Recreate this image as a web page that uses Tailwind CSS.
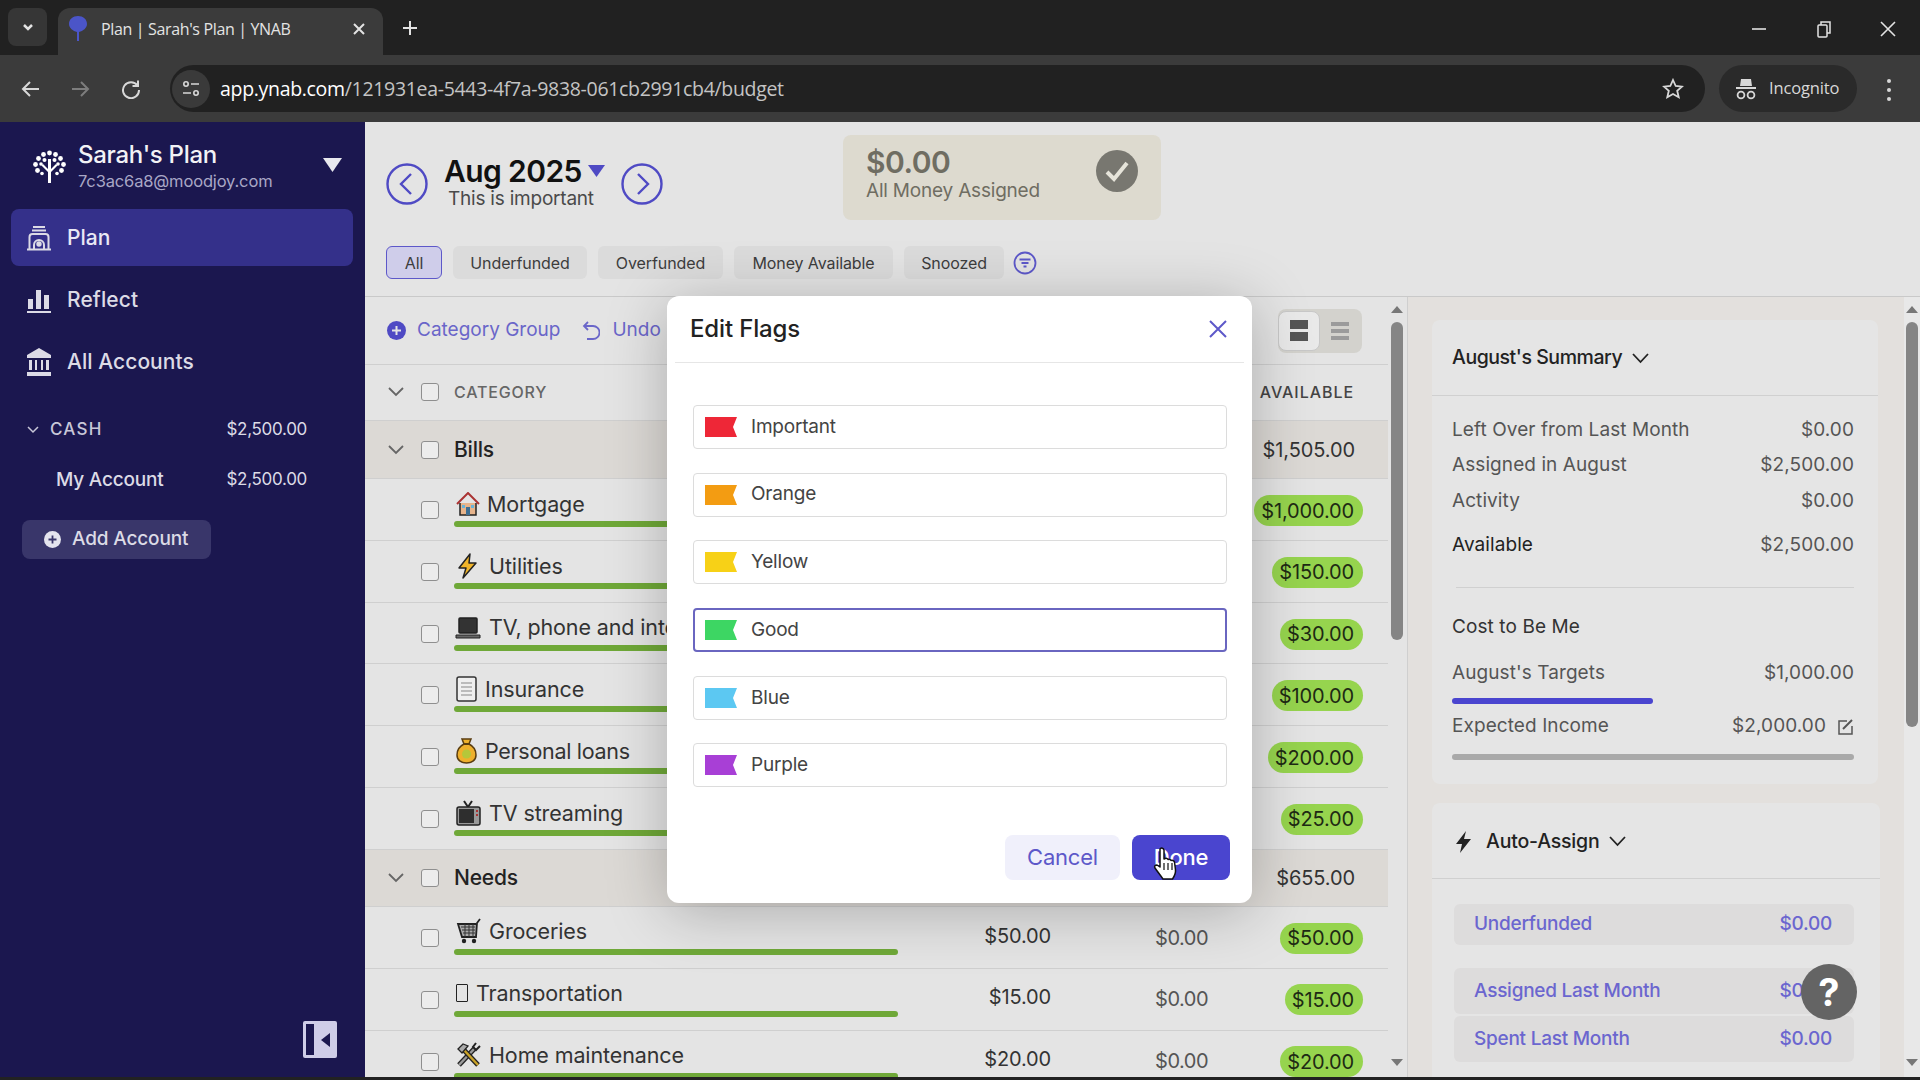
<!DOCTYPE html>
<html lang="en">
<head>
    <meta charset="UTF-8">
    <title>Plan | Sarah's Plan | YNAB</title>
    <script src="https://cdn.jsdelivr.net/npm/@tailwindcss/browser@4"></script>
</head>
<body class="bg-[#212121] font-[family-name:Inter,sans-serif] overflow-hidden">
<div class="w-[1920px] h-[1080px] flex flex-col relative overflow-hidden">

    <!-- browser tabs -->
    <div class="h-[55px] bg-[#212121] flex items-start text-[#e3e3e3] font-[family-name:Open_Sans,sans-serif] shrink-0">
        <div class="ml-[8px] mt-[8px] w-[39px] h-[38px] rounded-lg bg-[#363636] flex items-center justify-center">
            <svg class="w-[14px] h-[14px]" fill="none" stroke="currentColor" stroke-width="2.5" viewBox="0 0 14 14"><path d="M3 5l4 4 4-4"/></svg>
        </div>
        <div class="ml-[11px] mt-[8px] w-[325px] h-[47px] rounded-t-xl bg-[#3b3b3b] flex items-center pb-[6px]">
            <svg class="ml-[10px] w-[20px] h-[26px] text-[#4b55c8]" fill="currentColor" viewBox="0 0 20 26"><path d="M10 0c5 0 9 3 9 8 0 4-4 7-8 8v9H9v-9C5 15 1 12 1 8c0-5 4-8 9-8z"/></svg>
            <span class="ml-[13px] text-[16px] leading-none tracking-[-0.35px] whitespace-nowrap">Plan | Sarah's Plan | YNAB</span>
            <svg class="ml-auto mr-[17px] w-[14px] h-[14px]" fill="none" stroke="currentColor" stroke-width="2" viewBox="0 0 14 14"><path d="M2 2l10 10M12 2L2 12"/></svg>
        </div>
        <svg class="ml-[19px] mt-[20px] w-[16px] h-[16px]" fill="none" stroke="currentColor" stroke-width="2" viewBox="0 0 16 16"><path d="M8 1v14M1 8h14"/></svg>
        <div class="ml-auto mt-[20px] flex items-center">
            <svg class="w-[16px] h-[16px]" fill="none" stroke="currentColor" stroke-width="1.6" viewBox="0 0 16 16"><path d="M1 8h14"/></svg>
            <svg class="ml-[49px] w-[16px] h-[18px]" fill="none" stroke="currentColor" stroke-width="1.5" viewBox="0 0 16 18"><rect x="2" y="5" width="9" height="12" rx="1"/><path d="M5 5V2h9v11h-3"/></svg>
            <svg class="ml-[48px] mr-[24px] w-[16px] h-[16px]" fill="none" stroke="currentColor" stroke-width="1.6" viewBox="0 0 16 16"><path d="M1 1l14 14M15 1L1 15"/></svg>
        </div>
    </div>

    <!-- browser toolbar -->
    <div class="h-[67px] bg-[#3b3b3b] flex items-start text-[#d8d8d8] font-[family-name:Open_Sans,sans-serif] shrink-0">
        <svg class="ml-[21px] mt-[24px] w-[20px] h-[20px]" fill="none" stroke="currentColor" stroke-width="2" viewBox="0 0 20 20"><path d="M18 10H3M9 3l-7 7 7 7"/></svg>
        <svg class="ml-[29px] mt-[24px] w-[20px] h-[20px] text-[#7d7d7d]" fill="none" stroke="currentColor" stroke-width="2" viewBox="0 0 20 20"><path d="M2 10h15M11 3l7 7-7 7"/></svg>
        <svg class="ml-[31px] mt-[24px] w-[20px] h-[20px]" fill="none" stroke="currentColor" stroke-width="2" viewBox="0 0 20 20"><path d="M16.5 6.5A8 8 0 1 0 18 11M17 1.5v5.5h-5.5"/></svg>
        <div class="ml-[29px] mt-[10px] w-[1535px] h-[47px] rounded-full bg-[#212121] flex items-center">
            <div class="ml-[2px] w-[38px] h-[38px] rounded-full bg-[#3a3a3a] flex items-center justify-center">
                <svg class="w-[18px] h-[18px]" fill="none" stroke="currentColor" stroke-width="1.6" viewBox="0 0 18 18"><circle cx="4" cy="4" r="2.2"/><path d="M9 4h8M1 13h8"/><circle cx="14" cy="13" r="2.2"/></svg>
            </div>
            <span class="ml-[10px] text-[19.5px] leading-none tracking-[-0.32px] whitespace-nowrap"><span class="text-white">app.ynab.com</span><span class="text-[#c4c4c4]">/121931ea-5443-4f7a-9838-061cb2991cb4/budget</span></span>
            <svg class="ml-auto mr-[21px] w-[22px] h-[22px]" fill="none" stroke="currentColor" stroke-width="1.8" viewBox="0 0 22 22"><path d="M11 2l2.7 6 6.3.6-4.8 4.2 1.5 6.4L11 16l-5.7 3.2 1.5-6.4L2 8.6 8.3 8z"/></svg>
        </div>
        <div class="ml-[14px] mt-[10px] w-[138px] h-[47px] rounded-full bg-[#2a2a2a] flex items-center">
            <svg class="ml-[17px] w-[20px] h-[22px]" fill="currentColor" viewBox="0 0 20 22"><path d="M5 1h10l1 7H4zM0 9h20v2H0z"/><circle cx="5" cy="17" r="3.4" fill="none" stroke="currentColor" stroke-width="1.8"/><circle cx="15" cy="17" r="3.4" fill="none" stroke="currentColor" stroke-width="1.8"/></svg>
            <span class="ml-[13px] text-[16.5px] leading-none tracking-[-0.15px]">Incognito</span>
        </div>
        <div class="ml-[30px] mt-[24px] flex flex-col gap-[5px]">
            <span class="w-[4px] h-[4px] rounded-full bg-[#d8d8d8]"></span>
            <span class="w-[4px] h-[4px] rounded-full bg-[#d8d8d8]"></span>
            <span class="w-[4px] h-[4px] rounded-full bg-[#d8d8d8]"></span>
        </div>
    </div>

    <!-- app -->
    <div class="flex h-[955px] shrink-0 relative overflow-hidden">

        <!-- sidebar -->
        <aside class="w-[365px] shrink-0 bg-[#1b174f] flex flex-col relative text-[#dcdbe6]">
            <div class="h-[87px] flex items-start">
                <svg class="ml-[33px] mt-[28px] w-[33px] h-[33px] text-white" fill="currentColor" viewBox="0 0 33 33"><path d="M15 33V22L8.500 15.500l1.500-1.500 5 5V9h3v10l5-5 1.500 1.500L18 22v11z"/><circle cx="16.500" cy="3" r="2.400"/><circle cx="10.500" cy="4.500" r="2.400"/><circle cx="22.500" cy="4.500" r="2.400"/><circle cx="5.500" cy="8.500" r="2.400"/><circle cx="27.500" cy="8.500" r="2.400"/><circle cx="2.500" cy="14.500" r="2.400"/><circle cx="30.500" cy="14.500" r="2.400"/><circle cx="4.500" cy="20.500" r="2.400"/><circle cx="28.500" cy="20.500" r="2.400"/><circle cx="11.500" cy="10" r="2"/><circle cx="21.500" cy="10" r="2"/><circle cx="8" cy="14" r="1.800"/><circle cx="25" cy="14" r="1.800"/><circle cx="9" cy="23.500" r="1.800"/><circle cx="24" cy="23.500" r="1.800"/></svg>
                <div class="ml-[12px] mt-[18px]">
                    <div class="text-[24px] leading-[30px] font-medium text-[#f2f2f6] tracking-[-0.3px]">Sarah's Plan</div>
                    <div class="text-[16.500px] leading-[22px] text-[#a9a7c6] tracking-[-0.15px]">7c3ac6a8@moodjoy.com</div>
                </div>
                <svg class="ml-auto mr-[23px] mt-[36px] w-[19px] h-[14px] text-[#e8e8ee]" fill="currentColor" viewBox="0 0 19 14"><path d="M0 0h19L9.500 14z"/></svg>
            </div>
            <div class="ml-[11px] mr-[12px] h-[57px] rounded-lg bg-[#34308a] flex items-center">
                <svg class="ml-[15px] w-[26px] h-[26px]" fill="none" stroke="currentColor" stroke-width="2" viewBox="0 0 26 26"><path d="M7 2h12M6 5.500h14M3.500 24.500V12c0-2 1-3 3-3h13c2 0 3 1 3 3v12.500zM1 24.500h24"/><path d="M8 24v-4a5 5 0 0 1 10 0v4"/><circle cx="13" cy="19" r="1.700" fill="currentColor"/></svg>
                <span class="ml-[15px] text-[21px] font-medium text-[#e9e8f5]">Plan</span>
            </div>
            <div class="mt-[5px] h-[57px] flex items-center">
                <svg class="ml-[26px] w-[26px] h-[26px]" fill="currentColor" viewBox="0 0 26 26"><path d="M2 12h5v10H2zM10 3h5v19h-5zM18 8h5v14h-5zM1 24h24v2H1z"/></svg>
                <span class="ml-[15px] text-[21px] font-medium tracking-[0.1px]">Reflect</span>
            </div>
            <div class="mt-[5px] h-[57px] flex items-center">
                <svg class="ml-[26px] w-[26px] h-[28px]" fill="currentColor" viewBox="0 0 26 28"><path d="M13 0l12 7v3H1V7zM3 12h3v10H3zM9 12h2v10H9zM15 12h2v10h-2zM20 12h3v10h-3zM1 24h24v4H1z"/></svg>
                <span class="ml-[15px] text-[21px] font-medium tracking-[0.05px]">All Accounts</span>
            </div>
            <div class="mt-[28px] flex items-center h-[24px] text-[#c8c7d8]">
                <svg class="ml-[27px] w-[12px] h-[8px]" fill="none" stroke="currentColor" stroke-width="1.500" viewBox="0 0 12 8"><path d="M1 1l5 5 5-5"/></svg>
                <span class="ml-[11px] text-[17px] font-medium tracking-[1.2px]">CASH</span>
                <span class="ml-auto mr-[58px] text-[17px] text-[#dcdbe6] tracking-[-0.3px]">$2,500.00</span>
            </div>
            <div class="mt-[25px] flex items-center h-[26px]">
                <span class="ml-[56px] text-[19px] font-medium tracking-[-0.2px]">My Account</span>
                <span class="ml-auto mr-[58px] text-[17px] tracking-[-0.3px]">$2,500.00</span>
            </div>
            <div class="ml-[22px] mt-[27px] w-[189px] h-[39px] rounded-lg bg-[#39366a] flex items-center">
                <svg class="ml-[22px] w-[17px] h-[17px] text-[#e4e4ee]" viewBox="0 0 17 17"><circle cx="8.500" cy="8.500" r="8.500" fill="currentColor"/><path d="M8.500 4.500v8M4.500 8.500h8" stroke="#39366a" stroke-width="1.800"/></svg>
                <span class="ml-[11px] text-[19px] font-medium text-[#dcdbe6] tracking-[-0.15px]">Add Account</span>
            </div>
            <div class="absolute left-[303px] top-[899px] w-[34px] h-[37px] bg-[#cfcde8] rounded-[2px] flex items-center">
                <span class="ml-[3px] w-[8px] h-[31px] bg-[#1b174f]"></span>
                <svg class="ml-[7px] w-[9px] h-[14px] text-[#1b174f]" fill="currentColor" viewBox="0 0 9 14"><path d="M9 0v14L0 7z"/></svg>
            </div>
        </aside>

        <!-- main -->
        <main class="flex-1 bg-[#e4e4e4] flex flex-col min-w-0">
            <!-- month header -->
            <header class="h-[175px] shrink-0 border-b border-[#c9c9c9] pl-[21px] pt-[13px]">
                <div class="h-[85px] flex items-start">
                    <svg class="mt-[28px] w-[42px] h-[42px] text-[#4f4ac4]" fill="none" stroke="currentColor" stroke-width="2.400" viewBox="0 0 42 42"><circle cx="21" cy="21" r="19.500"/><path d="M25 11L15 21l10 10"/></svg>
                    <div class="ml-[16px] mt-[17px] w-[177px]">
                        <div class="flex items-start h-[38px]">
                            <span class="text-[30px] leading-[38px] font-semibold text-[#111] tracking-[-0.6px]">Aug 2025</span>
                            <svg class="ml-[6px] mt-[13px] w-[17px] h-[12px] text-[#4f4ac4]" fill="currentColor" viewBox="0 0 17 12"><path d="M0 0h17L8.500 12z"/></svg>
                        </div>
                        <div class="ml-[4px] -mt-[2px] text-[19px] leading-[22px] text-[#4a4a4a] tracking-[-0.22px]">This is important</div>
                    </div>
                    <svg class="mt-[28px] w-[42px] h-[42px] text-[#4f4ac4]" fill="none" stroke="currentColor" stroke-width="2.400" viewBox="0 0 42 42"><circle cx="21" cy="21" r="19.500"/><path d="M17 11l10 10-10 10"/></svg>
                    <div class="ml-[180px] w-[318px] h-[85px] rounded-lg bg-[#dddacf] flex items-center relative">
                        <div class="ml-[23px] -mt-[9px] text-[#6f6d62]">
                            <div class="text-[30px] leading-[36px] font-semibold tracking-[-0.5px]">$0.00</div>
                            <div class="text-[19px] leading-[24px] tracking-[-0.2px] -mt-[1px]">All Money Assigned</div>
                        </div>
                        <div class="ml-auto mr-[23px] -mt-[13px] w-[42px] h-[42px] rounded-full bg-[#787770] flex items-center justify-center">
                            <svg class="w-[26px] h-[24px] text-[#e6e4da]" fill="none" stroke="currentColor" stroke-width="4" viewBox="0 0 26 24"><path d="M3 13l7 7L23 4"/></svg>
                        </div>
                    </div>
                </div>
                <div class="mt-[26px] flex items-center gap-[11px] text-[16px] text-[#3d3d3d] tracking-[-0.1px]">
                    <span class="w-[56px] h-[33px] rounded-md bg-[#cfcdea] border border-[#5d58c9] flex items-center justify-center">All</span>
                    <span class="w-[134px] h-[33px] rounded-md bg-[#dbdbdb] flex items-center justify-center">Underfunded</span>
                    <span class="w-[125px] h-[33px] rounded-md bg-[#dbdbdb] flex items-center justify-center">Overfunded</span>
                    <span class="w-[159px] h-[33px] rounded-md bg-[#dbdbdb] flex items-center justify-center">Money Available</span>
                    <span class="w-[100px] h-[33px] rounded-md bg-[#dbdbdb] flex items-center justify-center">Snoozed</span>
                    <svg class="-ml-[2px] w-[24px] h-[24px] text-[#5d58c9]" fill="none" stroke="currentColor" stroke-width="1.800" viewBox="0 0 24 24"><circle cx="12" cy="12" r="10.500"/><path d="M6.500 8.500h11M8.500 12h7M10.500 15.500h3"/></svg>
                </div>
            </header>

            <div class="flex flex-1 min-h-0">
                <!-- budget table -->
                <section class="w-[1023px] shrink-0 overflow-hidden">
                    <div class="h-[68px] border-b border-[#cfcfcf] flex items-center text-[#6a66c9] text-[19px] tracking-[0px]">
                        <svg class="ml-[22px] w-[19px] h-[19px] text-[#4f4ac4]" viewBox="0 0 19 19"><circle cx="9.500" cy="9.500" r="9.500" fill="currentColor"/><path d="M9.500 5v9M5 9.500h9" stroke="#e4e4e4" stroke-width="2"/></svg>
                        <span class="ml-[11px]">Category Group</span>
                        <svg class="ml-[22px] w-[18px] h-[20px]" fill="none" stroke="currentColor" stroke-width="1.800" viewBox="0 0 18 20"><path d="M6 1L2 5l4 4M2 5h9a5.500 5.500 0 0 1 0 13H5"/></svg>
                        <span class="ml-[12px]">Undo</span>
                        <div class="ml-auto mr-[26px] w-[84px] h-[44px] rounded-lg bg-[#d3d2cd] flex items-center">
                            <div class="w-[42px] h-[40px] rounded-lg bg-[#e9e9e9] border border-[#c8c8c8] flex flex-col gap-[3px] items-center justify-center">
                                <span class="w-[18px] h-[9px] bg-[#555]"></span>
                                <span class="w-[18px] h-[9px] bg-[#555]"></span>
                            </div>
                            <div class="ml-[11px] flex flex-col gap-[3px]">
                                <span class="w-[18px] h-[4px] bg-[#9b9b9b]"></span>
                                <span class="w-[18px] h-[4px] bg-[#9b9b9b]"></span>
                                <span class="w-[18px] h-[4px] bg-[#9b9b9b]"></span>
                            </div>
                        </div>
                    </div>

                    <div class="h-[56px] border-b border-[#cfcfcf] flex items-center pb-[2px]">
                        <svg class="ml-[23px] w-[16px] h-[10px] text-[#666]" fill="none" stroke="currentColor" stroke-width="1.800" viewBox="0 0 16 10"><path d="M1 1l7 7 7-7"/></svg>
                        <span class="ml-[17px] w-[18px] h-[18px] rounded-[3px] border border-[#8f8f8f] bg-[#ececec]"></span>
                        <span class="ml-[15px] text-[16px] font-medium tracking-[0.8px] text-[#666]">CATEGORY</span>
                        <span class="ml-auto mr-[34px] text-[16px] font-medium tracking-[0.95px] text-[#444]">AVAILABLE</span>
                    </div>

                    <!-- Bills -->
                    <div class="h-[58px] border-b border-[#cfcfcf] bg-[#dcd9d5] flex items-center">
                        <svg class="ml-[23px] w-[16px] h-[10px] text-[#666]" fill="none" stroke="currentColor" stroke-width="1.800" viewBox="0 0 16 10"><path d="M1 1l7 7 7-7"/></svg>
                        <span class="ml-[17px] w-[18px] h-[18px] rounded-[3px] border border-[#8f8f8f] bg-[#ececec]"></span>
                        <span class="ml-[15px] text-[21px] font-medium text-[#222] tracking-[-0.2px]">Bills</span>
                        <span class="ml-auto mr-[33px] text-[20px] text-[#333] tracking-[-0.1px]">$1,505.00</span>
                    </div>

                    <div class="h-[61.800px] border-b border-[#cfcfcf] flex">
                        <span class="ml-[56px] mt-[22px] w-[18px] h-[18px] rounded-[3px] border border-[#8f8f8f] bg-[#ececec]"></span>
                        <div class="ml-[15px] w-[444px] mt-[11px]">
                            <div class="h-[28px] flex items-center text-[21.500px] text-[#333] tracking-[-0.12px]">
                                <svg class="ml-[2px] w-[24px] h-[24px]" viewBox="0 0 24 24"><path d="M4 11v12h16V11" fill="#e7b48b" stroke="#222" stroke-width="1.500"/><path d="M1 12L12 1l11 11" fill="none" stroke="#a33" stroke-width="2"/><rect x="10" y="15" width="4" height="8" fill="#3d6d91"/><rect x="6" y="13" width="3" height="3" fill="#69b3d8"/><rect x="15" y="13" width="3" height="3" fill="#69b3d8"/></svg>
                                <span class="ml-[7px]">Mortgage</span>
                            </div>
                            <div class="mt-[3px] h-[6px] rounded-full bg-[#6fa838]"></div>
                        </div>
                        <div class="ml-auto mr-[25px] mt-[16px] h-[31px] pl-[7px] pr-[9px] rounded-full bg-[#96d44e] flex items-center text-[20px] text-[#1e2a14] tracking-[-0.15px]">$1,000.00</div>
                    </div>
                    <div class="h-[61.800px] border-b border-[#cfcfcf] flex">
                        <span class="ml-[56px] mt-[22px] w-[18px] h-[18px] rounded-[3px] border border-[#8f8f8f] bg-[#ececec]"></span>
                        <div class="ml-[15px] w-[444px] mt-[11px]">
                            <div class="h-[28px] flex items-center text-[21.500px] text-[#333] tracking-[-0.12px]">
                                <svg class="ml-[1px] w-[25px] h-[26px]" viewBox="0 0 25 26"><path d="M15 1L4 15h7l-3 10 13-15h-7z" fill="#f0b429" stroke="#222" stroke-width="1.500" stroke-linejoin="round"/></svg>
                                <span class="ml-[9px]">Utilities</span>
                            </div>
                            <div class="mt-[3px] h-[6px] rounded-full bg-[#6fa838]"></div>
                        </div>
                        <div class="ml-auto mr-[25px] mt-[16px] h-[31px] pl-[7px] pr-[9px] rounded-full bg-[#96d44e] flex items-center text-[20px] text-[#1e2a14] tracking-[-0.15px]">$150.00</div>
                    </div>
                    <div class="h-[61.800px] border-b border-[#cfcfcf] flex">
                        <span class="ml-[56px] mt-[22px] w-[18px] h-[18px] rounded-[3px] border border-[#8f8f8f] bg-[#ececec]"></span>
                        <div class="ml-[15px] w-[444px] mt-[11px]">
                            <div class="h-[28px] flex items-center text-[21.500px] text-[#333] tracking-[-0.12px]">
                                <svg class="ml-[1px] w-[26px] h-[24px]" viewBox="0 0 26 24"><rect x="4" y="2" width="18" height="15" rx="1" fill="#333" stroke="#222" stroke-width="1.500"/><path d="M1 19h24v3H1z" fill="#666" stroke="#222"/></svg>
                                <span class="ml-[8px] whitespace-nowrap">TV, phone and internet</span>
                            </div>
                            <div class="mt-[3px] h-[6px] rounded-full bg-[#6fa838]"></div>
                        </div>
                        <div class="ml-auto mr-[25px] mt-[16px] h-[31px] pl-[7px] pr-[9px] rounded-full bg-[#96d44e] flex items-center text-[20px] text-[#1e2a14] tracking-[-0.15px]">$30.00</div>
                    </div>
                    <div class="h-[61.800px] border-b border-[#cfcfcf] flex">
                        <span class="ml-[56px] mt-[22px] w-[18px] h-[18px] rounded-[3px] border border-[#8f8f8f] bg-[#ececec]"></span>
                        <div class="ml-[15px] w-[444px] mt-[11px]">
                            <div class="h-[28px] flex items-center text-[21.500px] text-[#333] tracking-[-0.12px]">
                                <svg class="ml-[2px] w-[21px] h-[26px]" viewBox="0 0 21 26"><rect x="1" y="1" width="19" height="24" rx="2" fill="#efefef" stroke="#333" stroke-width="1.500"/><path d="M5 7h11M5 11h11M5 15h11M5 19h11" stroke="#888" stroke-width="1.200"/></svg>
                                <span class="ml-[8px]">Insurance</span>
                            </div>
                            <div class="mt-[3px] h-[6px] rounded-full bg-[#6fa838]"></div>
                        </div>
                        <div class="ml-auto mr-[25px] mt-[16px] h-[31px] pl-[7px] pr-[9px] rounded-full bg-[#96d44e] flex items-center text-[20px] text-[#1e2a14] tracking-[-0.15px]">$100.00</div>
                    </div>
                    <div class="h-[61.800px] border-b border-[#cfcfcf] flex">
                        <span class="ml-[56px] mt-[22px] w-[18px] h-[18px] rounded-[3px] border border-[#8f8f8f] bg-[#ececec]"></span>
                        <div class="ml-[15px] w-[444px] mt-[11px]">
                            <div class="h-[28px] flex items-center text-[21.500px] text-[#333] tracking-[-0.3px]">
                                <svg class="ml-[2px] w-[21px] h-[26px]" viewBox="0 0 21 26"><path d="M6 1h9l-2 5c4 2 7 6 7 11 0 5-4 8-9.500 8S1 22 1 17c0-5 3-9 7-11z" fill="#eeb02c" stroke="#5a3d10" stroke-width="1.500"/><path d="M7 6h7" stroke="#5a3d10" stroke-width="2"/><circle cx="10.500" cy="16" r="4.500" fill="#b5c73a"/></svg>
                                <span class="ml-[8px]">Personal loans</span>
                            </div>
                            <div class="mt-[3px] h-[6px] rounded-full bg-[#6fa838]"></div>
                        </div>
                        <div class="ml-auto mr-[25px] mt-[16px] h-[31px] pl-[7px] pr-[9px] rounded-full bg-[#96d44e] flex items-center text-[20px] text-[#1e2a14] tracking-[-0.15px]">$200.00</div>
                    </div>
                    <div class="h-[61.800px] border-b border-[#cfcfcf] flex">
                        <span class="ml-[56px] mt-[22px] w-[18px] h-[18px] rounded-[3px] border border-[#8f8f8f] bg-[#ececec]"></span>
                        <div class="ml-[15px] w-[444px] mt-[11px]">
                            <div class="h-[28px] flex items-center text-[21.500px] text-[#333] tracking-[-0.12px]">
                                <svg class="ml-[2px] w-[25px] h-[26px]" viewBox="0 0 25 26"><path d="M8 1l4 6 4-6" fill="none" stroke="#222" stroke-width="2"/><rect x="1" y="7" width="23" height="18" rx="2" fill="#999" stroke="#222" stroke-width="1.500"/><rect x="3" y="9" width="15" height="14" fill="#2e2e2e"/><path d="M20 11h2M20 15h2" stroke="#a33" stroke-width="2"/></svg>
                                <span class="ml-[8px]">TV streaming</span>
                            </div>
                            <div class="mt-[3px] h-[6px] rounded-full bg-[#6fa838]"></div>
                        </div>
                        <div class="ml-auto mr-[25px] mt-[16px] h-[31px] pl-[7px] pr-[9px] rounded-full bg-[#96d44e] flex items-center text-[20px] text-[#1e2a14] tracking-[-0.15px]">$25.00</div>
                    </div>

                    <!-- Needs -->
                    <div class="h-[57.400px] border-b border-[#cfcfcf] bg-[#dcd9d5] flex items-center">
                        <svg class="ml-[23px] w-[16px] h-[10px] text-[#666]" fill="none" stroke="currentColor" stroke-width="1.800" viewBox="0 0 16 10"><path d="M1 1l7 7 7-7"/></svg>
                        <span class="ml-[17px] w-[18px] h-[18px] rounded-[3px] border border-[#8f8f8f] bg-[#ececec]"></span>
                        <span class="ml-[15px] text-[21px] font-medium text-[#222] tracking-[-0.2px]">Needs</span>
                        <span class="ml-auto mr-[33px] text-[20px] text-[#333] tracking-[-0.1px]">$655.00</span>
                    </div>

                    <div class="h-[61.800px] border-b border-[#cfcfcf] flex">
                        <span class="ml-[56px] mt-[22px] w-[18px] h-[18px] rounded-[3px] border border-[#8f8f8f] bg-[#ececec]"></span>
                        <div class="ml-[15px] w-[444px] mt-[10px]">
                            <div class="h-[28px] flex items-center text-[21.500px] text-[#333] tracking-[-0.12px]">
                                <svg class="ml-[2px] w-[25px] h-[26px]" viewBox="0 0 25 26"><path d="M24 1l-3 4-1 14H6L2 6h18" fill="#aaa" stroke="#222" stroke-width="1.800"/><path d="M5 9h14M6 12h13M7 15h12M9 6v13M13 6v13M17 6v13" stroke="#333"/><circle cx="8" cy="23" r="2.200" fill="#222"/><circle cx="18" cy="23" r="2.200" fill="#222"/></svg>
                                <span class="ml-[8px]">Groceries</span>
                            </div>
                            <div class="mt-[4px] h-[6px] rounded-full bg-[#6fa838]"></div>
                        </div>
                        <div class="w-[153px] mt-[13px] h-[31px] flex items-center justify-end text-[20px] text-[#333] tracking-[-0.15px]">$50.00</div>
                        <div class="w-[157px] mt-[15px] h-[31px] flex items-center justify-end text-[20px] text-[#555] tracking-[-0.5px]">$0.00</div>
                        <div class="ml-auto mr-[25px] mt-[15.500px] h-[31px] pl-[7px] pr-[9px] rounded-full bg-[#96d44e] flex items-center text-[20px] text-[#1e2a14] tracking-[-0.15px]">$50.00</div>
                    </div>
                    <div class="h-[61.800px] border-b border-[#cfcfcf] flex">
                        <span class="ml-[56px] mt-[22px] w-[18px] h-[18px] rounded-[3px] border border-[#8f8f8f] bg-[#ececec]"></span>
                        <div class="ml-[15px] w-[444px] mt-[10px]">
                            <div class="h-[28px] flex items-center text-[21.500px] text-[#333] tracking-[-0.12px]">
                                <span class="ml-[2px] w-[12px] h-[18px] border border-[#222] rounded-[1px]"></span>
                                <span class="ml-[8px]">Transportation</span>
                            </div>
                            <div class="mt-[4px] h-[6px] rounded-full bg-[#6fa838]"></div>
                        </div>
                        <div class="w-[153px] mt-[13px] h-[31px] flex items-center justify-end text-[20px] text-[#333] tracking-[-0.15px]">$15.00</div>
                        <div class="w-[157px] mt-[15px] h-[31px] flex items-center justify-end text-[20px] text-[#555] tracking-[-0.5px]">$0.00</div>
                        <div class="ml-auto mr-[25px] mt-[15.500px] h-[31px] pl-[7px] pr-[9px] rounded-full bg-[#96d44e] flex items-center text-[20px] text-[#1e2a14] tracking-[-0.15px]">$15.00</div>
                    </div>
                    <div class="h-[61.800px] flex">
                        <span class="ml-[56px] mt-[22px] w-[18px] h-[18px] rounded-[3px] border border-[#8f8f8f] bg-[#ececec]"></span>
                        <div class="ml-[15px] w-[444px] mt-[10px]">
                            <div class="h-[28px] flex items-center text-[21.500px] text-[#333] tracking-[-0.12px]">
                                <svg class="ml-[2px] w-[25px] h-[26px]" viewBox="0 0 25 26"><path d="M3 23L19 6" stroke="#222" stroke-width="5"/><path d="M3 23L19 6" stroke="#999" stroke-width="2.500"/><path d="M22 23L7 7" stroke="#222" stroke-width="5"/><path d="M22 23L7 7" stroke="#c9a227" stroke-width="2.500"/><path d="M2 7l5-5 5 2-6 7z" fill="#aaa" stroke="#222" stroke-width="1.300"/><path d="M24 4l-4 4-3-3 3-4" fill="none" stroke="#222" stroke-width="2"/></svg>
                                <span class="ml-[8px]">Home maintenance</span>
                            </div>
                            <div class="mt-[4px] h-[6px] rounded-full bg-[#6fa838]"></div>
                        </div>
                        <div class="w-[153px] mt-[13px] h-[31px] flex items-center justify-end text-[20px] text-[#333] tracking-[-0.15px]">$20.00</div>
                        <div class="w-[157px] mt-[15px] h-[31px] flex items-center justify-end text-[20px] text-[#555] tracking-[-0.5px]">$0.00</div>
                        <div class="ml-auto mr-[25px] mt-[15.500px] h-[31px] pl-[7px] pr-[9px] rounded-full bg-[#96d44e] flex items-center text-[20px] text-[#1e2a14] tracking-[-0.15px]">$20.00</div>
                    </div>
                </section>

                <!-- table scrollbar -->
                <div class="w-[20px] shrink-0 flex flex-col items-center pt-[9px] pr-[2px] border-r border-[#cfcfcf]">
                    <svg class="w-[12px] h-[7px] text-[#777]" fill="currentColor" viewBox="0 0 12 7"><path d="M6 0l6 7H0z"/></svg>
                    <div class="mt-[9px] w-[12px] h-[318px] rounded-full bg-[#858585]"></div>
                    <svg class="mt-auto mb-[11px] w-[12px] h-[7px] text-[#777]" fill="currentColor" viewBox="0 0 12 7"><path d="M6 7l6-7H0z"/></svg>
                </div>

                <!-- right panel -->
                <section class="flex-1 bg-[#e3e0dd] flex relative min-w-0">
                    <div class="w-[495px] shrink-0 pl-[24px] pt-[23px]">
                        <div class="w-[446px] h-[464px] bg-[#e5e5e5] rounded-lg">
                            <div class="h-[76px] border-b border-[#d0d0d0] flex items-center pl-[20px] pt-[1px] text-[19.500px] font-medium text-[#222] tracking-[-0.45px]">
                                <span>August's Summary</span>
                                <svg class="ml-[10px] w-[17px] h-[11px]" fill="none" stroke="currentColor" stroke-width="1.800" viewBox="0 0 17 11"><path d="M1 1l7.500 8L16 1"/></svg>
                            </div>
                            <div class="pl-[20px] pr-[24px] pt-[16px] text-[19px] text-[#555] tracking-[0.08px]">
                                <div class="h-[36px] flex items-center justify-between"><span>Left Over from Last Month</span><span>$0.00</span></div>
                                <div class="h-[35px] flex items-center justify-between"><span>Assigned in August</span><span>$2,500.00</span></div>
                                <div class="h-[36px] flex items-center justify-between"><span>Activity</span><span>$0.00</span></div>
                                <div class="h-[36px] mt-[8px] flex items-center justify-between"><span class="text-[#222]">Available</span><span>$2,500.00</span></div>
                                <div class="ml-[4px] mt-[24px] border-t border-[#d0d0d0]"></div>
                                <div class="mt-[24px] h-[30px] flex items-center text-[#333] tracking-[0.1px]">Cost to Be Me</div>
                                <div class="mt-[16px] h-[30px] flex items-center justify-between"><span>August's Targets</span><span>$1,000.00</span></div>
                                <div class="mt-[10px] w-[201px] h-[6px] rounded-full bg-[#4a45cf]"></div>
                                <div class="mt-[7px] h-[30px] flex items-center justify-between">
                                    <span>Expected Income</span>
                                    <span class="flex items-center">$2,000.00
                                        <svg class="ml-[11px] w-[17px] h-[17px]" fill="none" stroke="currentColor" stroke-width="1.500" viewBox="0 0 17 17"><path d="M10 3H2v13h13V8"/><path d="M6 11l9-9" stroke-width="2"/></svg>
                                    </span>
                                </div>
                                <div class="mt-[13px] h-[6px] rounded-full bg-[#a9a9a9]"></div>
                            </div>
                        </div>
                        <div class="mt-[19px] w-[448px] h-[300px] bg-[#e5e5e5] rounded-lg">
                            <div class="h-[76px] border-b border-[#d0d0d0] flex items-center pl-[24px] pt-[2px] text-[19.500px] font-medium text-[#222] tracking-[-0.2px]">
                                <svg class="w-[15px] h-[22px]" fill="currentColor" viewBox="0 0 15 22"><path d="M10 0L0 13h6l-2 9 11-14H8z"/></svg>
                                <span class="ml-[15px]">Auto-Assign</span>
                                <svg class="ml-[10px] w-[17px] h-[11px]" fill="none" stroke="currentColor" stroke-width="1.800" viewBox="0 0 17 11"><path d="M1 1l7.500 8L16 1"/></svg>
                            </div>
                            <div class="pl-[22px] pr-[26px] text-[19px] font-medium text-[#6b66cf] tracking-[-0.25px]">
                                <div class="mt-[25px] h-[41px] rounded-md bg-[#dddcdc] flex items-center justify-between pl-[20px] pr-[22px]"><span>Underfunded</span><span>$0.00</span></div>
                                <div class="mt-[23px] h-[46px] rounded-md bg-[#dddcdc] flex items-center justify-between pl-[20px] pr-[22px]"><span>Assigned Last Month</span><span>$0.00</span></div>
                                <div class="mt-[2px] h-[46px] rounded-md bg-[#dddcdc] flex items-center justify-between pl-[20px] pr-[22px]"><span>Spent Last Month</span><span>$0.00</span></div>
                            </div>
                        </div>
                    </div>
                    <!-- panel scrollbar -->
                    <div class="w-[16px] ml-auto bg-[#e8e8e8] flex flex-col items-center pt-[9px]">
                        <svg class="w-[12px] h-[7px] text-[#777]" fill="currentColor" viewBox="0 0 12 7"><path d="M6 0l6 7H0z"/></svg>
                        <div class="mt-[9px] w-[12px] h-[405px] rounded-full bg-[#858585]"></div>
                        <svg class="mt-auto mb-[11px] w-[12px] h-[7px] text-[#777]" fill="currentColor" viewBox="0 0 12 7"><path d="M6 7l6-7H0z"/></svg>
                    </div>
                </section>
            </div>
        </main>

        <!-- help button -->
        <div class="absolute left-[1801px] top-[842px] w-[56px] h-[56px] rounded-full bg-[#646464] flex items-center justify-center text-white text-[38px] font-bold leading-none">?</div>

        <!-- edit flags modal -->
        <div class="absolute left-[667px] top-[174px] w-[585px] h-[607px] bg-white rounded-xl shadow-[0_8px_60px_rgba(0,0,0,0.25)]">
            <div class="mx-[8px] h-[67px] border-b border-[#e6e6e6] flex items-center pl-[15px] pr-[17px]">
                <span class="text-[24px] font-medium text-[#222] tracking-[-0.15px]">Edit Flags</span>
                <svg class="ml-auto w-[18px] h-[18px] text-[#5d58c9]" fill="none" stroke="currentColor" stroke-width="2" viewBox="0 0 18 18"><path d="M1 1l16 16M17 1L1 17"/></svg>
            </div>
            <div class="ml-[26px] w-[534px] pt-[42px] flex flex-col gap-[23.700px] text-[19px] text-[#444] tracking-[-0.2px]">
                <div class="h-[44px] rounded-[4px] border border-[#dcdcdc] flex items-center">
                    <svg class="ml-[11px] w-[32px] h-[20px] text-[#ee2737]" fill="currentColor" viewBox="0 0 32 20"><path d="M0 0h32l-4 10 4 10H0z"/></svg>
                    <span class="ml-[14px]">Important</span>
                </div>
                <div class="h-[44px] rounded-[4px] border border-[#dcdcdc] flex items-center">
                    <svg class="ml-[11px] w-[32px] h-[20px] text-[#f39c12]" fill="currentColor" viewBox="0 0 32 20"><path d="M0 0h32l-4 10 4 10H0z"/></svg>
                    <span class="ml-[14px]">Orange</span>
                </div>
                <div class="h-[44px] rounded-[4px] border border-[#dcdcdc] flex items-center">
                    <svg class="ml-[11px] w-[32px] h-[20px] text-[#f7d117]" fill="currentColor" viewBox="0 0 32 20"><path d="M0 0h32l-4 10 4 10H0z"/></svg>
                    <span class="ml-[14px]">Yellow</span>
                </div>
                <div class="h-[44px] rounded-[4px] border-2 border-[#6a66c0] flex items-center">
                    <svg class="ml-[10px] w-[32px] h-[20px] text-[#3dd663]" fill="currentColor" viewBox="0 0 32 20"><path d="M0 0h32l-4 10 4 10H0z"/></svg>
                    <span class="ml-[14px]">Good</span>
                </div>
                <div class="h-[44px] rounded-[4px] border border-[#dcdcdc] flex items-center">
                    <svg class="ml-[11px] w-[32px] h-[20px] text-[#5cc8f2]" fill="currentColor" viewBox="0 0 32 20"><path d="M0 0h32l-4 10 4 10H0z"/></svg>
                    <span class="ml-[14px]">Blue</span>
                </div>
                <div class="h-[44px] rounded-[4px] border border-[#dcdcdc] flex items-center">
                    <svg class="ml-[11px] w-[32px] h-[20px] text-[#a83fd6]" fill="currentColor" viewBox="0 0 32 20"><path d="M0 0h32l-4 10 4 10H0z"/></svg>
                    <span class="ml-[14px]">Purple</span>
                </div>
            </div>
            <div class="mt-[47.500px] mr-[22px] flex justify-end gap-[12px] text-[22px] tracking-[-0.2px]">
                <span class="w-[115px] h-[45px] rounded-lg bg-[#f0f0fb] text-[#5d58c9] flex items-center justify-center">Cancel</span>
                <span class="w-[98px] h-[45px] rounded-lg bg-[#4a45cf] text-white font-medium flex items-center justify-center">Done</span>
            </div>
            <!-- mouse cursor -->
            <svg class="absolute left-[486px] top-[551px] w-[26px] h-[34px]" viewBox="0 0 26 34"><path d="M7 2c1.500-1.500 3.500-1 4 1v9l1-.5c1-.5 2.500 0 3 1 1-.5 2.500 0 3 1 1-.5 3 0 3.500 1.500l1 8c.3 3-1 6-3 9H10c-2-3-6-8-8-11-1-1.500 0-3 2-3l3 2z" fill="#fff" stroke="#111" stroke-width="1.500" stroke-linejoin="round"/><path d="M11 16v7M15 16v7M19 16v7" stroke="#111" stroke-width="1.200"/></svg>
        </div>
    </div>

    <div class="flex-1 bg-[#222]"></div>
</div>
</body>
</html>
